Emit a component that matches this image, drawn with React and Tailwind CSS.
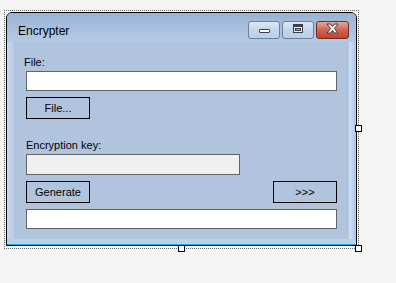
import React from "react";

const font = { fontFamily: '"Liberation Sans", Arial, sans-serif' };

function App() {
  return (
    <div
      className="w-[396px] h-[283px] bg-[#f5f5f5] pl-[4px] pt-[10px]"
      style={font}
    >
      <div className="relative w-[355px] h-[239px] border border-dotted border-[#6b6b6b] pt-[1px] pl-[1px] pr-[1px] pb-[2px]">
        <FormWindow />
        <Handle className="left-[350px] top-[114px]" />
        <Handle className="left-[173px] top-[234px]" />
        <Handle className="left-[350px] top-[234px]" />
      </div>
    </div>
  );
}

function Handle({ className }) {
  return (
    <div
      className={`absolute w-[7px] h-[7px] bg-white border border-black ${className}`}
    />
  );
}

function FormWindow() {
  return (
    <div className="w-[351px] h-[234px] border border-black rounded-t-[6px] overflow-hidden flex flex-col bg-[#bad2ea]">
      <TitleBar />
      <div className="flex flex-1">
        <div className="w-[7px] bg-gradient-to-r from-[#c3d9ef] to-[#b6cee8]" />
        <ClientArea />
        <div className="w-[7px] bg-gradient-to-r from-[#cfe2f4] to-[#a9c8e6]" />
      </div>
      <div className="h-[6px] bg-[#b9d3ec] border-b border-[#2aa8d8]" />
    </div>
  );
}

function TitleBar() {
  return (
    <div className="h-[29px] flex justify-between pl-[11px] pr-[7px] bg-gradient-to-b from-[#98b3d5] to-[#b4cbe5]">
      <span className="pt-[10px] text-[12px] leading-[16px] text-black">
        Encrypter
      </span>
      <div className="flex gap-[2px] pt-[8px]">
        <CaptionButton>
          <div className="mt-[7px] w-[11px] h-[4px] bg-white border border-[#3a3f48] rounded-[1px]" />
        </CaptionButton>
        <CaptionButton>
          <div className="mt-[2px] w-[10px] h-[9px] border-[#3a3f48] border border-t-[3px] bg-[#e8eef5] flex items-center justify-center">
            <div className="w-[6px] h-[3px] bg-[#9bb0c8] border border-[#3a3f48]" />
          </div>
        </CaptionButton>
        <CloseButton />
      </div>
    </div>
  );
}

function CaptionButton({ children }) {
  return (
    <div className="w-[32px] h-[18px] rounded-[3px] border border-[#6c7f9c] bg-gradient-to-b from-[#dde8f4] via-[#c3d5e9] to-[#b9cfe7] flex justify-center items-start">
      {children}
    </div>
  );
}

function CloseButton() {
  return (
    <div className="w-[33px] h-[18px] rounded-[3px] border border-[#6e2d25] bg-gradient-to-b from-[#e6a896] via-[#cf6350] to-[#c0452f] flex justify-center items-start pt-[1px]">
      <svg width="13" height="11" viewBox="0 0 13 11">
        <path
          d="M1 1 H4.5 L6.5 3.5 L8.5 1 H12 L8.3 5.5 L12 10 H8.5 L6.5 7.5 L4.5 10 H1 L4.7 5.5 Z"
          fill="#ffffff"
          stroke="#3b3b3b"
          strokeWidth="1"
          strokeLinejoin="round"
        />
      </svg>
    </div>
  );
}

function ClientArea() {
  return (
    <div className="w-[335px] h-[197px] bg-[#b0c4de] pl-[12px] pt-[14px] flex flex-col text-[11px] text-black">
      <label className="ml-[-2px] leading-[13px]">File:</label>
      <input
        readOnly
        className="mt-[2px] w-[311px] h-[20px] bg-white border border-[#646464] outline-none"
      />
      <WinButton className="mt-[6px]">File...</WinButton>
      <label className="mt-[20px] leading-[13px]">Encryption key:</label>
      <input
        readOnly
        className="mt-[2px] w-[214px] h-[21px] bg-[#f0f0f0] border border-[#646464] outline-none"
      />
      <div className="mt-[6px] w-[311px] flex justify-between">
        <WinButton>Generate</WinButton>
        <WinButton>&gt;&gt;&gt;</WinButton>
      </div>
      <input
        readOnly
        className="mt-[6px] w-[311px] h-[20px] bg-white border border-[#646464] outline-none"
      />
    </div>
  );
}

function WinButton({ children, className = "" }) {
  return (
    <button
      className={`w-[64px] h-[22px] border border-black bg-[#b0c4de] text-[11px] leading-[13px] text-black ${className}`}
    >
      {children}
    </button>
  );
}

export default App;
